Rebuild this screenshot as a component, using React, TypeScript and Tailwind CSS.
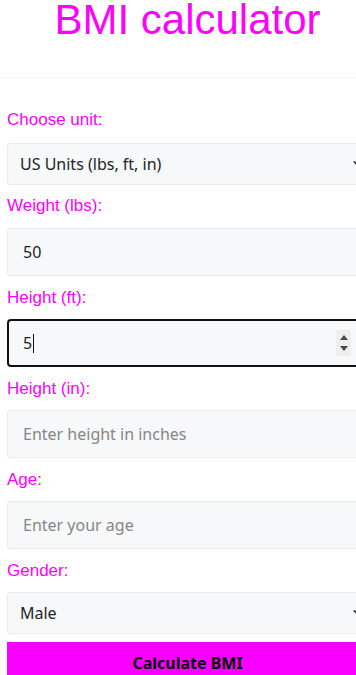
import React from 'react';

const labelCls = 'block text-[17px] leading-6 text-[#ff00ff] font-["Liberation_Sans",Arial,sans-serif]';
const fieldCls =
  'block w-full rounded-[3px] border border-[#e9eaec] bg-[#f7f8f9] text-[16px] text-[#212529] font-["Noto_Sans",sans-serif] outline-none placeholder:text-[#868686]';

const Chevron = () => (
  <svg
    className="pointer-events-none absolute right-[4px] top-1/2 -translate-y-1/2"
    width="11"
    height="11"
    viewBox="0 0 16 16"
    fill="none"
    stroke="#343a40"
    strokeWidth="2.6"
    strokeLinecap="round"
    strokeLinejoin="round"
  >
    <path d="M2 5l6 6 6-6" />
  </svg>
);

const SelectField = ({ value, options }: { value: string; options: string[] }) => (
  <div className="relative">
    <select
      defaultValue={value}
      className={`${fieldCls} h-[42px] appearance-none pl-[12px] pr-8`}
    >
      {options.map((o) => (
        <option key={o}>{o}</option>
      ))}
    </select>
    <Chevron />
  </div>
);

const TextField = ({ value, placeholder }: { value?: string; placeholder?: string }) => (
  <input
    type="text"
    readOnly
    defaultValue={value}
    placeholder={placeholder}
    className={`${fieldCls} h-[48px] px-[15px]`}
  />
);

const FocusedField = ({ value }: { value: string }) => (
  <div className="relative flex h-[48px] w-full items-center rounded-[4px] border-2 border-[#111] bg-[#f7f8f9] px-[14px] font-['Noto_Sans',sans-serif] text-[16px] text-[#212529]">
    <span>{value}</span>
    <span className="ml-px h-[19px] w-px bg-[#111]" />
    <div className="absolute left-[327px] top-1/2 flex h-[26px] w-[15px] -translate-y-1/2 flex-col items-center justify-center gap-[6px] bg-[#eeeeef]">
      <svg width="8" height="5" viewBox="0 0 8 5">
        <path d="M0 5L4 0l4 5z" fill="#4a4a4a" />
      </svg>
      <svg width="8" height="5" viewBox="0 0 8 5">
        <path d="M0 0l4 5 4-5z" fill="#4a4a4a" />
      </svg>
    </div>
  </div>
);

export default function App() {
  return (
    <div className="min-h-screen w-full overflow-hidden bg-white">
      <div className="w-[375px]">
        <header className="h-[78px] border-b border-[#f4f4f4] text-center">
          <h1 className="font-['Liberation_Sans',Arial,sans-serif] text-[42px] leading-[40px] text-[#ff00ff]">
            BMI calculator
          </h1>
        </header>

        <form className="px-[7px] pt-[20px]">
          <label className={`${labelCls} mt-[10px] mb-[11px]`}>Choose unit:</label>
          <SelectField value="US Units (lbs, ft, in)" options={['US Units (lbs, ft, in)', 'Metric Units (kg, cm)']} />

          <label className={`${labelCls} mt-[9px] mb-[10px]`}>Weight (lbs):</label>
          <TextField value="50" />

          <label className={`${labelCls} mt-[10px] mb-[9px]`}>Height (ft):</label>
          <FocusedField value="5" />

          <label className={`${labelCls} mt-[10px] mb-[9px]`}>Height (in):</label>
          <TextField placeholder="Enter height in inches" />

          <label className={`${labelCls} mt-[10px] mb-[9px]`}>Age:</label>
          <TextField placeholder="Enter your age" />

          <label className={`${labelCls} mt-[10px] mb-[9px]`}>Gender:</label>
          <SelectField value="Male" options={['Male', 'Female']} />

          <button
            type="button"
            className="mt-[8px] block h-[42px] w-full bg-[#f700ff] font-['Noto_Sans',sans-serif] text-[16px] font-bold text-black"
          >
            Calculate BMI
          </button>
        </form>
      </div>
    </div>
  );
}
